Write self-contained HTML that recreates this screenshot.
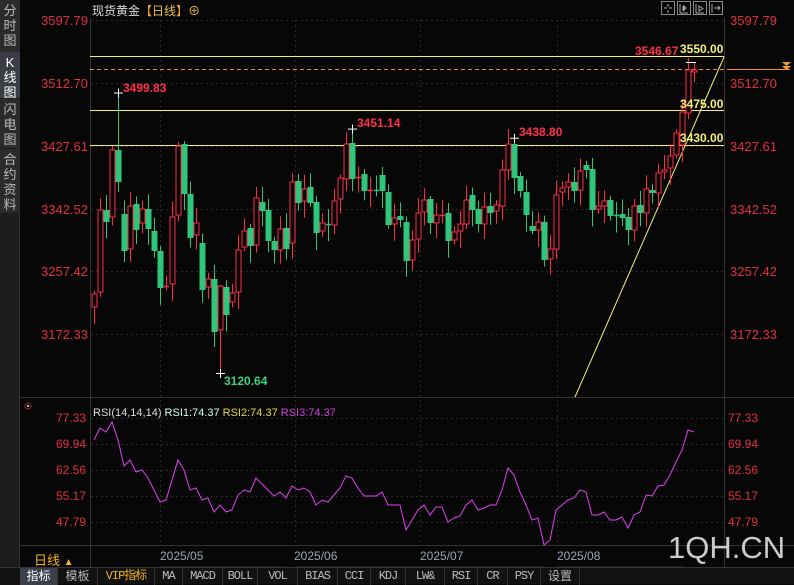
<!DOCTYPE html>
<html><head><meta charset="utf-8"><style>
*{margin:0;padding:0;box-sizing:border-box}
body{width:794px;height:584px;background:#070707;overflow:hidden;position:relative;font-family:"Liberation Sans","Noto Sans CJK SC",sans-serif}
.side{position:absolute;left:0;top:0;width:20px;height:567px;background:#1c1c1c;border-right:1px solid #333}
.tab{position:absolute;left:0;width:20px;background:#2b2b2b;color:#bbb;font-size:13px;line-height:15px;text-align:center;padding-top:3px}
.tab.sel{background:#3a3d44;color:#fff}
.bot{position:absolute;left:0;top:567px;width:794px;height:17px;background:#111;display:flex;border-top:1px solid #333}
.bot div{height:17px;line-height:16px;font-size:12px;color:#bbb;text-align:center;border-right:1px solid #333;font-family:"Liberation Mono","Noto Sans CJK SC",monospace;letter-spacing:-1px}
.t{position:absolute;white-space:nowrap}
</style></head><body>
<div class="side">
<div class="tab" style="top:0;height:52px">分<br>时<br>图</div>
<div class="tab sel" style="top:52px;height:46px">K<br>线<br>图</div>
<div class="tab" style="top:99px;height:49px">闪<br>电<br>图</div>
<div class="tab" style="top:149px;height:64px">合<br>约<br>资<br>料</div>
</div>
<svg id="s" width="794" height="584" style="position:absolute;left:0;top:0" xmlns="http://www.w3.org/2000/svg"></svg>
<div class="t" style="left:92px;top:2px;font-size:12px;color:#ddd">现货黄金<span style="color:#f0a020">【</span><span style="color:#e8c040">日线</span><span style="color:#f0a020">】</span><span style="color:#e8c040">⊕</span></div>
<div class="t" style="left:93px;top:407px;font-size:11px"><span style="color:#ddd">RSI(14,14,14)</span> <span style="color:#cfe">RSI1:74.37</span> <span style="color:#e8d840">RSI2:74.37</span> <span style="color:#d040e0">RSI3:74.37</span></div>
<div class="t" style="left:34px;top:550px;font-size:13px;color:#f0b020">日线 <span style="font-size:10px">▲</span></div>
<div class="t" style="left:668px;top:530px;font-size:31px;color:#ccc;letter-spacing:0">1QH.CN</div>
<div class="bot">
<div style="width:20px;border:none;background:#111"></div>
<div style="width:38px;background:#3a3f4a;color:#fff;font-family:'Liberation Sans','Noto Sans CJK SC',sans-serif;letter-spacing:0">指标</div>
<div style="width:40px;font-family:'Liberation Sans','Noto Sans CJK SC',sans-serif;letter-spacing:0">模板</div>
<div style="width:57px;color:#f0b020">VIP指标</div>
<div style="width:28px">MA</div><div style="width:40px">MACD</div><div style="width:35px">BOLL</div><div style="width:40px">VOL</div><div style="width:40px">BIAS</div><div style="width:33px">CCI</div><div style="width:35px">KDJ</div><div style="width:39px">LW&amp;</div><div style="width:33px">RSI</div><div style="width:30px">CR</div><div style="width:33px">PSY</div><div style="width:39px;font-family:'Liberation Sans','Noto Sans CJK SC',sans-serif;letter-spacing:0">设置</div>
</div>
<script>
var s=document.getElementById('s'),h='';
function L(x1,y1,x2,y2,c,w,d){h+='<line x1="'+x1+'" y1="'+y1+'" x2="'+x2+'" y2="'+y2+'" stroke="'+c+'" stroke-width="'+(w||1)+'"'+(d?' stroke-dasharray="'+d+'"':'')+'/>';}
function T(x,y,t,c,sz,a,b){h+='<text x="'+x+'" y="'+y+'" fill="'+c+'" font-size="'+sz+'" font-family="Liberation Sans,sans-serif"'+(a?' text-anchor="'+a+'"':'')+(b?' font-weight="bold"':'')+'>'+t+'</text>';}
L(90.5,18,90.5,567,'#333');L(724.5,18,724.5,567,'#333');
L(20,397.5,794,397.5,'#333');L(20,545.5,794,545.5,'#333');
var pl=[[20,'3597.79'],[83,'3512.70'],[146,'3427.61'],[209,'3342.52'],[271,'3257.42'],[334,'3172.33']];
pl.forEach(function(p){L(91,p[0]+.5,724,p[0]+.5,'#2a2a2a',1,'2,3');T(88,p[0]+5,p[1],'#e0303c',13,'end');T(730,p[0]+5,p[1],'#e0303c',13);});
var rl=[[418,'77.33'],[444,'69.94'],[470,'62.56'],[496,'55.17'],[522,'47.79']];
rl.forEach(function(p){L(91,p[0]+.5,724,p[0]+.5,'#2a2a2a',1,'2,3');T(86,p[0]+4,p[1],'#e0303c',12,'end');T(728,p[0]+4,p[1],'#e0303c',12);});
[160,295,420,557].forEach(function(x){L(x+.5,20,x+.5,545,'#2a2a2a',1,'2,3');});
[['2025/05',160],['2025/06',294],['2025/07',420],['2025/08',557]].forEach(function(d){T(d[1],560,d[0],'#9aa6b8',12);L(d[1],567,d[1]+126,567,'#333');});
L(90,56.5,724,56.5,'#f2f07a');L(90,110.5,724,110.5,'#f2f07a');L(90,145.5,724,145.5,'#f2f07a');
L(90,69.5,724,69.5,'#e8903a',1,'4,3');L(727,69.5,790,69.5,'#e8903a');
h+='<path d="M782,62h9l-4.5,4z M782,66h9l-4.5,4z" fill="#f0a030"/>';
L(575,397,724,57,'#f2f07a');
var d=[[307,294],[292,210],[210,222],[217,150,146],[150,182,92.5,192],[214,251],[249,206],[204,230],[223,209],[209,229],[231,251],[251,288],[287,286],[284,217],[215,146,142],[144,194,141],[194,238],[235,223],[243,290],[287,279],[279,332],[330,286,285,373],[287,315],[302,293],[292,250],[247,231],[228,246],[245,198],[202,211],[210,241],[241,250],[250,229],[228,249],[243,182],[181,203],[201,189],[187,203],[202,233],[231,223],[224,225],[225,201],[199,178],[179,144],[143,179,128.6],[178,177],[174,191],[190.5,190],[190,190.5],[175,191],[192,225],[224,218],[216,220],[222,261],[260,240],[239,213],[212,200],[199,223],[223,215],[215.5,215],[213,241],[240,232],[231,224],[224,200],[195,210],[209,224],[224,207],[206,213],[211,205],[206,170],[170,144],[144,178,137.7],[176,191],[192,215],[226,231],[230,222],[222,260],[259,249],[249,195],[192,188],[187,182],[182,191],[190,171],[165,170],[169,210],[209,206],[206,201],[200,216],[215,216],[214,218],[217,230],[230,206],[205,213],[213,189],[190,193],[193,173],[172,170],[168,156],[155,133],[145,112],[113,70,57.8],[72,70,62,82]];
d.forEach(function(c,i){var x=94+6*i,o=c[0],cl=c[1],up=cl<o,t=Math.min(o,cl),b=Math.max(o,cl);
var hi=c[2]||t-3-Math.abs(Math.sin(i*2.3))*12,lo=c[3]||b+3+Math.abs(Math.cos(i*1.7))*14;
var col=up?'#ff2a44':'#2fc57a';L(x+.5,hi,x+.5,t,col);L(x+.5,b,x+.5,lo,col);
if(b-t<1.5)L(x-2,t+.5,x+3,t+.5,col,1.5);
else if(up)h+='<rect x="'+(x-2)+'" y="'+t+'" width="5" height="'+(b-t)+'" fill="#070707" stroke="'+col+'"/>';
else h+='<rect x="'+(x-2.5)+'" y="'+t+'" width="6" height="'+(b-t)+'" fill="'+col+'"/>';});
[[118,92.5],[352,128.6],[514,137.7],[220,373]].forEach(function(m){L(m[0]-4,m[1]+.5,m[0]+5,m[1]+.5,'#fff');L(m[0]+.5,m[1]-4,m[0]+.5,m[1]+5,'#fff');});
L(686,62.5,696,62.5,'#fff');
T(123,92,'3499.83','#ff3048',12,0,1);T(357,127,'3451.14','#ff3048',12,0,1);T(519,136,'3438.80','#ff3048',12,0,1);T(224,385,'3120.64','#3fd080',12,0,1);
T(635,55,'3546.67','#ff3048',12,0,1);T(680,53,'3550.00','#f4f07a',12,0,1);T(680,108,'3475.00','#f4f07a',12,0,1);T(680,142,'3430.00','#f4f07a',12,0,1);
var r=[440,428,432,422,440,466,460,472,470,478,490,502,500,480,460,470,490,488,500,498,512,505,512,510,495,490,492,478,484,490,496,492,498,486,490,488,492,505,500,502,495,488,476,478,488,496,496,496,492,505,505,505,530,520,510,505,515,507,507,522,518,516,505,500,510,508,505,505,490,468,475,492,505,520,518,545,540,510,505,500,498,490,492,515,515,512,520,520,517,528,515,512,495,496,486,485,475,462,450,430,432];
h+='<polyline fill="none" stroke="#e040f0" stroke-width="1" points="'+r.map(function(y,i){return (94+6*i)+','+y}).join(' ')+'"/>';
h+='<circle cx="28" cy="406" r="3" fill="none" stroke="#e04050" stroke-dasharray="1.5,1"/><circle cx="28" cy="406" r="1" fill="#fff"/>';
for(var k=0;k<4;k++){h+='<rect x="'+(661.5+k*16)+'" y="1.5" width="13" height="13" fill="none" stroke="#888"/>';}
h+='<path d="M668,4v3M668,10v3M664,8h3M669,8h3" stroke="#aaa"/><path d="M680,4v9h8M683,6v5M686,8l-2,-2v4z" stroke="#aaa" fill="none"/><path d="M696,4v9h8M699,6l4,2.5l-4,2.5z" stroke="#aaa" fill="none"/><path d="M712,4v9M714,8h6M718,6l2,2l-2,2" stroke="#aaa" fill="none"/>';
s.innerHTML=h;
</script>
</body></html>
